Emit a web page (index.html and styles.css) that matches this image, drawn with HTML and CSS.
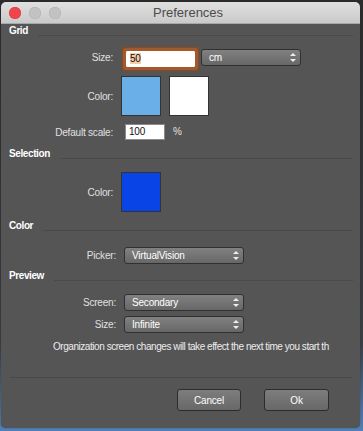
FILE: index.html
```html
<!DOCTYPE html>
<html lang="en">
<head>
    <meta charset="UTF-8">
    <title>Preferences</title>
    <link rel="stylesheet" href="styles.css">
</head>
<body>

<div class="window">
    <div class="titlebar">
        <div class="lights">
            <span class="light red"></span>
            <span class="light"></span>
            <span class="light"></span>
        </div>
        <div class="title">Preferences</div>
    </div>

    <div class="content">
        <!-- Grid -->
        <div class="section-head">Grid</div>
        <div class="row row-size">
            <label class="label label-up">Size:</label>
            <div class="input focused"><span class="selected">50</span></div>
            <div class="select select-unit">cm<span class="arrows"></span></div>
        </div>
        <div class="row row-color">
            <label class="label">Color:</label>
            <div class="swatch light-blue"></div>
            <div class="swatch white"></div>
        </div>
        <div class="row row-scale">
            <label class="label">Default scale:</label>
            <div class="input small">100</div>
            <span class="unit">%</span>
        </div>

        <!-- Selection -->
        <div class="section-head head-selection">Selection</div>
        <div class="row row-sel-color">
            <label class="label">Color:</label>
            <div class="swatch blue"></div>
        </div>

        <!-- Color -->
        <div class="section-head head-color">Color</div>
        <div class="row row-picker">
            <label class="label label-wide">Picker:</label>
            <div class="select">VirtualVision<span class="arrows"></span></div>
        </div>

        <!-- Preview -->
        <div class="section-head head-preview">Preview</div>
        <div class="row row-screen">
            <label class="label label-wide">Screen:</label>
            <div class="select">Secondary<span class="arrows"></span></div>
        </div>
        <div class="row row-psize">
            <label class="label label-wide">Size:</label>
            <div class="select">Infinite<span class="arrows"></span></div>
        </div>
        <div class="note">Organization screen changes will take effect the next time you start th</div>
    </div>

    <div class="footer">
        <div class="separator"></div>
        <div class="buttons">
            <button class="btn">Cancel</button>
            <button class="btn">Ok</button>
        </div>
    </div>
</div>

</body>
</html>
```

FILE: styles.css
```css
/* General styling */
body {
    margin: 0;
    width: 363px;
    height: 431px;
    overflow: hidden;
    background: linear-gradient(to bottom, #2c2c2c 0%, #3a3f46 80%, #4f80b8 100%);
    font-family: 'Liberation Sans', Arial, sans-serif;
    font-size: 10px;
    letter-spacing: -0.2px;
    color: #e2e2e2;
}
.window {
    margin: 2px 0 0 1px;
    width: 359px;
    height: 426px;
    border-radius: 5px;
    overflow: hidden;
    display: flex;
    flex-direction: column;
    background-color: #555555;
    box-shadow: 0 0 1px rgba(0, 0, 0, 0.6);
}

/* Title bar */
.titlebar {
    height: 21px;
    flex-shrink: 0;
    display: flex;
    align-items: center;
    background: linear-gradient(to bottom, #e0e0e0, #cacaca);
    border-bottom: 1px solid #a8a8a8;
}
.lights {
    display: flex;
    gap: 8px;
    padding-left: 8px;
    width: 130px;
}
.light {
    width: 12px;
    height: 12px;
    border-radius: 50%;
    background-color: #c2c2c2;
    box-shadow: inset 0 0 0 0.5px #b0b0b0;
}
.light.red {
    background-color: #f2444b;
    box-shadow: inset 0 0 0 0.5px #d8363c;
}
.title {
    margin-left: 14px;
    font-size: 13px;
    letter-spacing: 0;
    color: #4c4c4c;
}

/* Sections */
.content {
    display: flex;
    flex-direction: column;
}
.section-head {
    height: 13px;
    display: flex;
    align-items: center;
    padding: 0 7px 0 8px;
    font-weight: bold;
    letter-spacing: -0.4px;
    color: #ffffff;
}
.section-head::after {
    content: "";
    flex: 1;
    height: 1px;
    margin: 10px 0 0 10px;
    background-color: #4a4a4a;
}
.head-selection { margin-top: 7px; }
.head-color { margin-top: 7px; }
.head-preview { margin-top: 5px; }

.row {
    display: flex;
    align-items: center;
}
.label {
    width: 112px;
    text-align: right;
    color: #e0e0e0;
}
.label-up {
    margin-top: -4px;
}
.label-wide {
    width: 115px;
}
.row-size { margin-top: 11px; height: 22px; }
.row-color { margin-top: 6px; }
.row-scale { margin-top: 8px; height: 16px; }
.row-sel-color { margin-top: 12px; }
.row-picker { margin-top: 15px; }
.row-screen { margin-top: 12px; }
.row-psize { margin-top: 5px; }

/* Inputs */
.input {
    box-sizing: border-box;
    background-color: #ffffff;
    border: 1px solid #8a8a8a;
    color: #111111;
    padding-left: 3px;
    line-height: 14px;
}
.input.focused {
    width: 69px;
    height: 16px;
    margin-left: 13px;
    border-color: #ffffff;
    border-radius: 1px;
    box-shadow: 0 0 0 3px #a2592b, 0 0 0 4px #8c4a22;
}
.selected {
    background-color: #f6cba9;
}
.input.small {
    width: 40px;
    height: 16px;
    margin-left: 12px;
}
.unit {
    margin-left: 8px;
    margin-top: -2px;
}

.swatch {
    box-sizing: border-box;
    width: 40px;
    height: 40px;
    border: 1px solid #333333;
    margin-left: 8px;
}
.light-blue { background-color: #6aafe8; }
.white { background-color: #ffffff; }
.blue { background-color: #0844e6; }

.select {
    position: relative;
    box-sizing: border-box;
    width: 120px;
    height: 17px;
    margin-left: 8px;
    padding-left: 7px;
    line-height: 15px;
    color: #ffffff;
    border: 1px solid #303030;
    border-radius: 3px;
    background: linear-gradient(to bottom, #818181, #676767);
}
.select-unit {
    width: 100px;
    margin-left: 6px;
    margin-top: -4px;
}
.arrows {
    position: absolute;
    right: 7px;
    top: 3px;
    width: 0;
    height: 9px;
}
.arrows::before,
.arrows::after {
    content: "";
    position: absolute;
    left: -3px;
    border-left: 3px solid transparent;
    border-right: 3px solid transparent;
}
.arrows::before {
    top: 0;
    border-bottom: 3px solid #eeeeee;
}
.arrows::after {
    bottom: 0;
    border-top: 3px solid #eeeeee;
}

.note {
    margin: 7px 0 0 52px;
    height: 13px;
    line-height: 13px;
    white-space: nowrap;
    letter-spacing: -0.45px;
    color: #ececec;
}

/* Footer */
.footer {
    margin-top: auto;
    padding-bottom: 17px;
}
.separator {
    height: 1px;
    margin: 0 7px 0 9px;
    background-color: #4a4a4a;
}
.buttons {
    display: flex;
    justify-content: flex-end;
    gap: 23px;
    margin-top: 11px;
    padding-right: 31px;
}
.btn {
    width: 64px;
    height: 22px;
    padding: 0;
    font-family: 'Liberation Sans', Arial, sans-serif;
    font-size: 10px;
    letter-spacing: -0.2px;
    color: #ffffff;
    border: 1px solid #2c2c2c;
    border-radius: 3px;
    background: linear-gradient(to bottom, #7d7d7d, #686868);
}
.btn + .btn {
    width: 65px;
}
```
